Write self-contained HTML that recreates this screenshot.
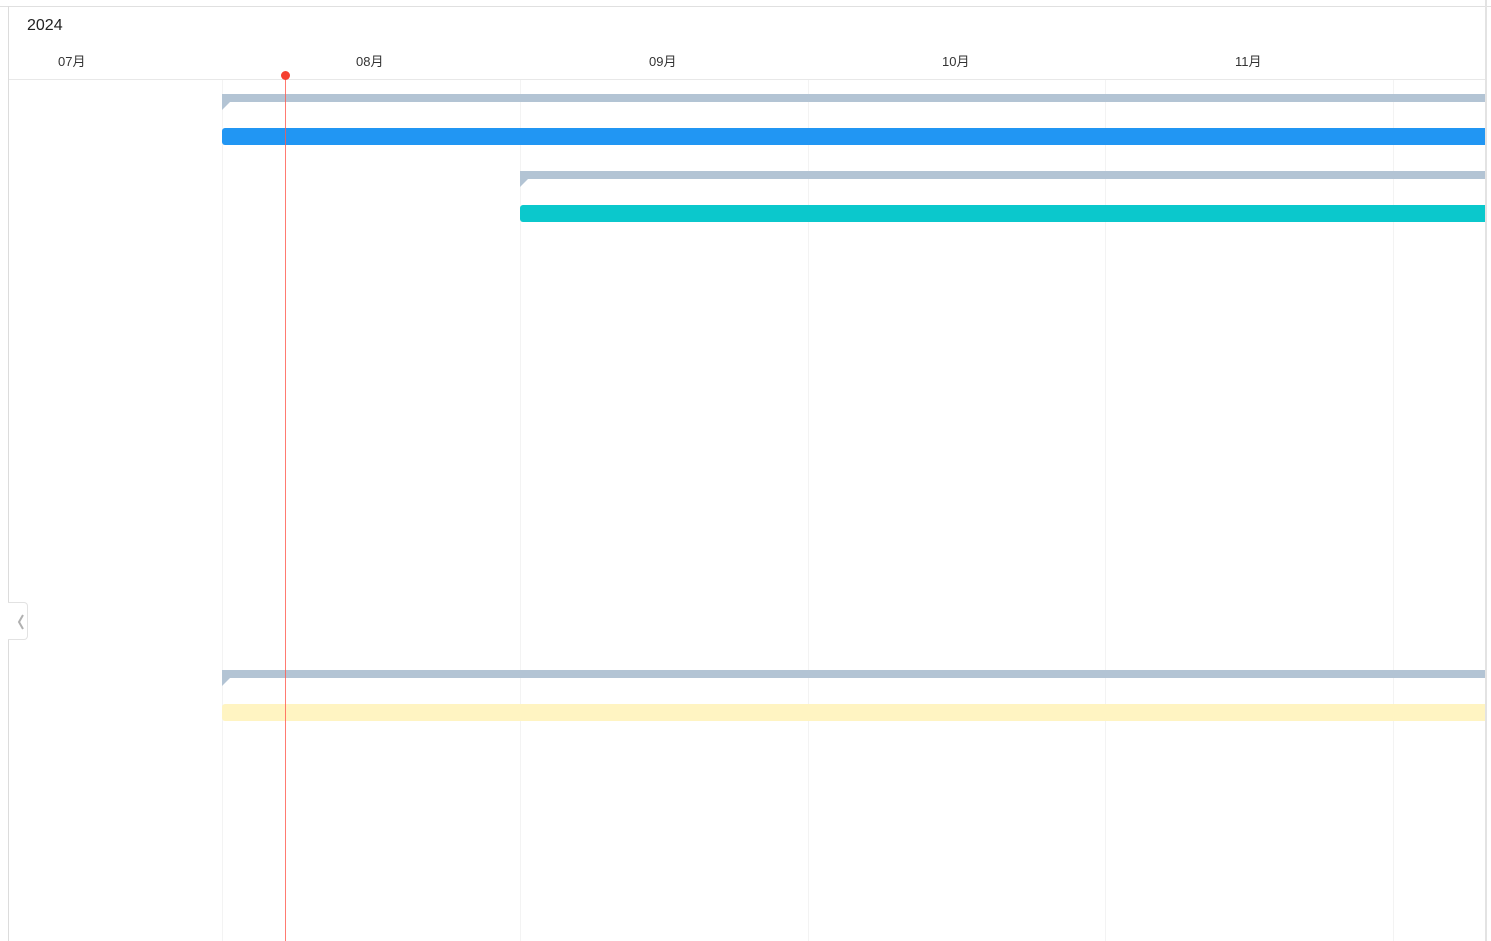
<!DOCTYPE html><html><head><style>
body{margin:0;width:1491px;height:941px;background:#fff;position:relative;overflow:hidden;font-family:"Liberation Sans","Noto Sans CJK SC",sans-serif}
div{position:absolute;box-sizing:border-box}
.v{top:80px;bottom:0;width:1px;background:#f3f3f3}
.m{top:51px;font-size:13px;color:#333}
.p{height:8px;background:#b3c4d4}
.t{width:0;height:0;border-top:8px solid #b3c4d4;border-right:8px solid transparent}
.b{height:17px;border-radius:3px 0 0 3px}
</style></head><body>
<div style="left:0;top:6px;width:1491px;height:1px;background:#e0e0e0"></div>
<div style="left:8px;top:6px;width:1px;height:935px;background:#dcdcdc"></div>
<div style="left:1485px;top:0;width:2px;height:941px;background:#e3e3e3"></div>
<div style="left:9px;top:79px;width:1476px;height:1px;background:#e8e8e8"></div>
<div style="left:27px;top:17px;font-size:16px;color:#222">2024</div>
<div class="m" style="left:58px">07月</div>
<div class="m" style="left:356px">08月</div>
<div class="m" style="left:649px">09月</div>
<div class="m" style="left:942px">10月</div>
<div class="m" style="left:1235px">11月</div>
<div class="v" style="left:222px"></div><div class="v" style="left:520px"></div><div class="v" style="left:808px"></div><div class="v" style="left:1105px"></div><div class="v" style="left:1393px"></div>
<div class="p" style="left:222px;top:94px;width:1263px"></div><div class="t" style="left:222px;top:102px"></div>
<div class="b" style="left:222px;top:128px;width:1263px;background:#2196f3"></div>
<div class="p" style="left:520px;top:171px;width:965px"></div><div class="t" style="left:520px;top:179px"></div>
<div class="b" style="left:520px;top:205px;width:965px;background:#0bc8cc"></div>
<div class="p" style="left:222px;top:670px;width:1263px"></div><div class="t" style="left:222px;top:678px"></div>
<div class="b" style="left:222px;top:704px;width:1263px;background:#fff4c2"></div>
<div style="left:285px;top:75px;width:1px;height:866px;background:#ff5a4e;opacity:0.8"></div>
<div style="left:281px;top:71px;width:9px;height:9px;border-radius:50%;background:#f53f2f"></div>
<div style="left:8px;top:602px;width:20px;height:38px;border:1px solid #e2e2e2;border-left:none;border-radius:0 4px 4px 0;background:#fff"><svg width="19" height="36" style="position:absolute;left:0;top:0"><path d="M15 12 L11 19 L15 26" fill="none" stroke="#b0b0b0" stroke-width="2"/></svg></div>
</body></html>
